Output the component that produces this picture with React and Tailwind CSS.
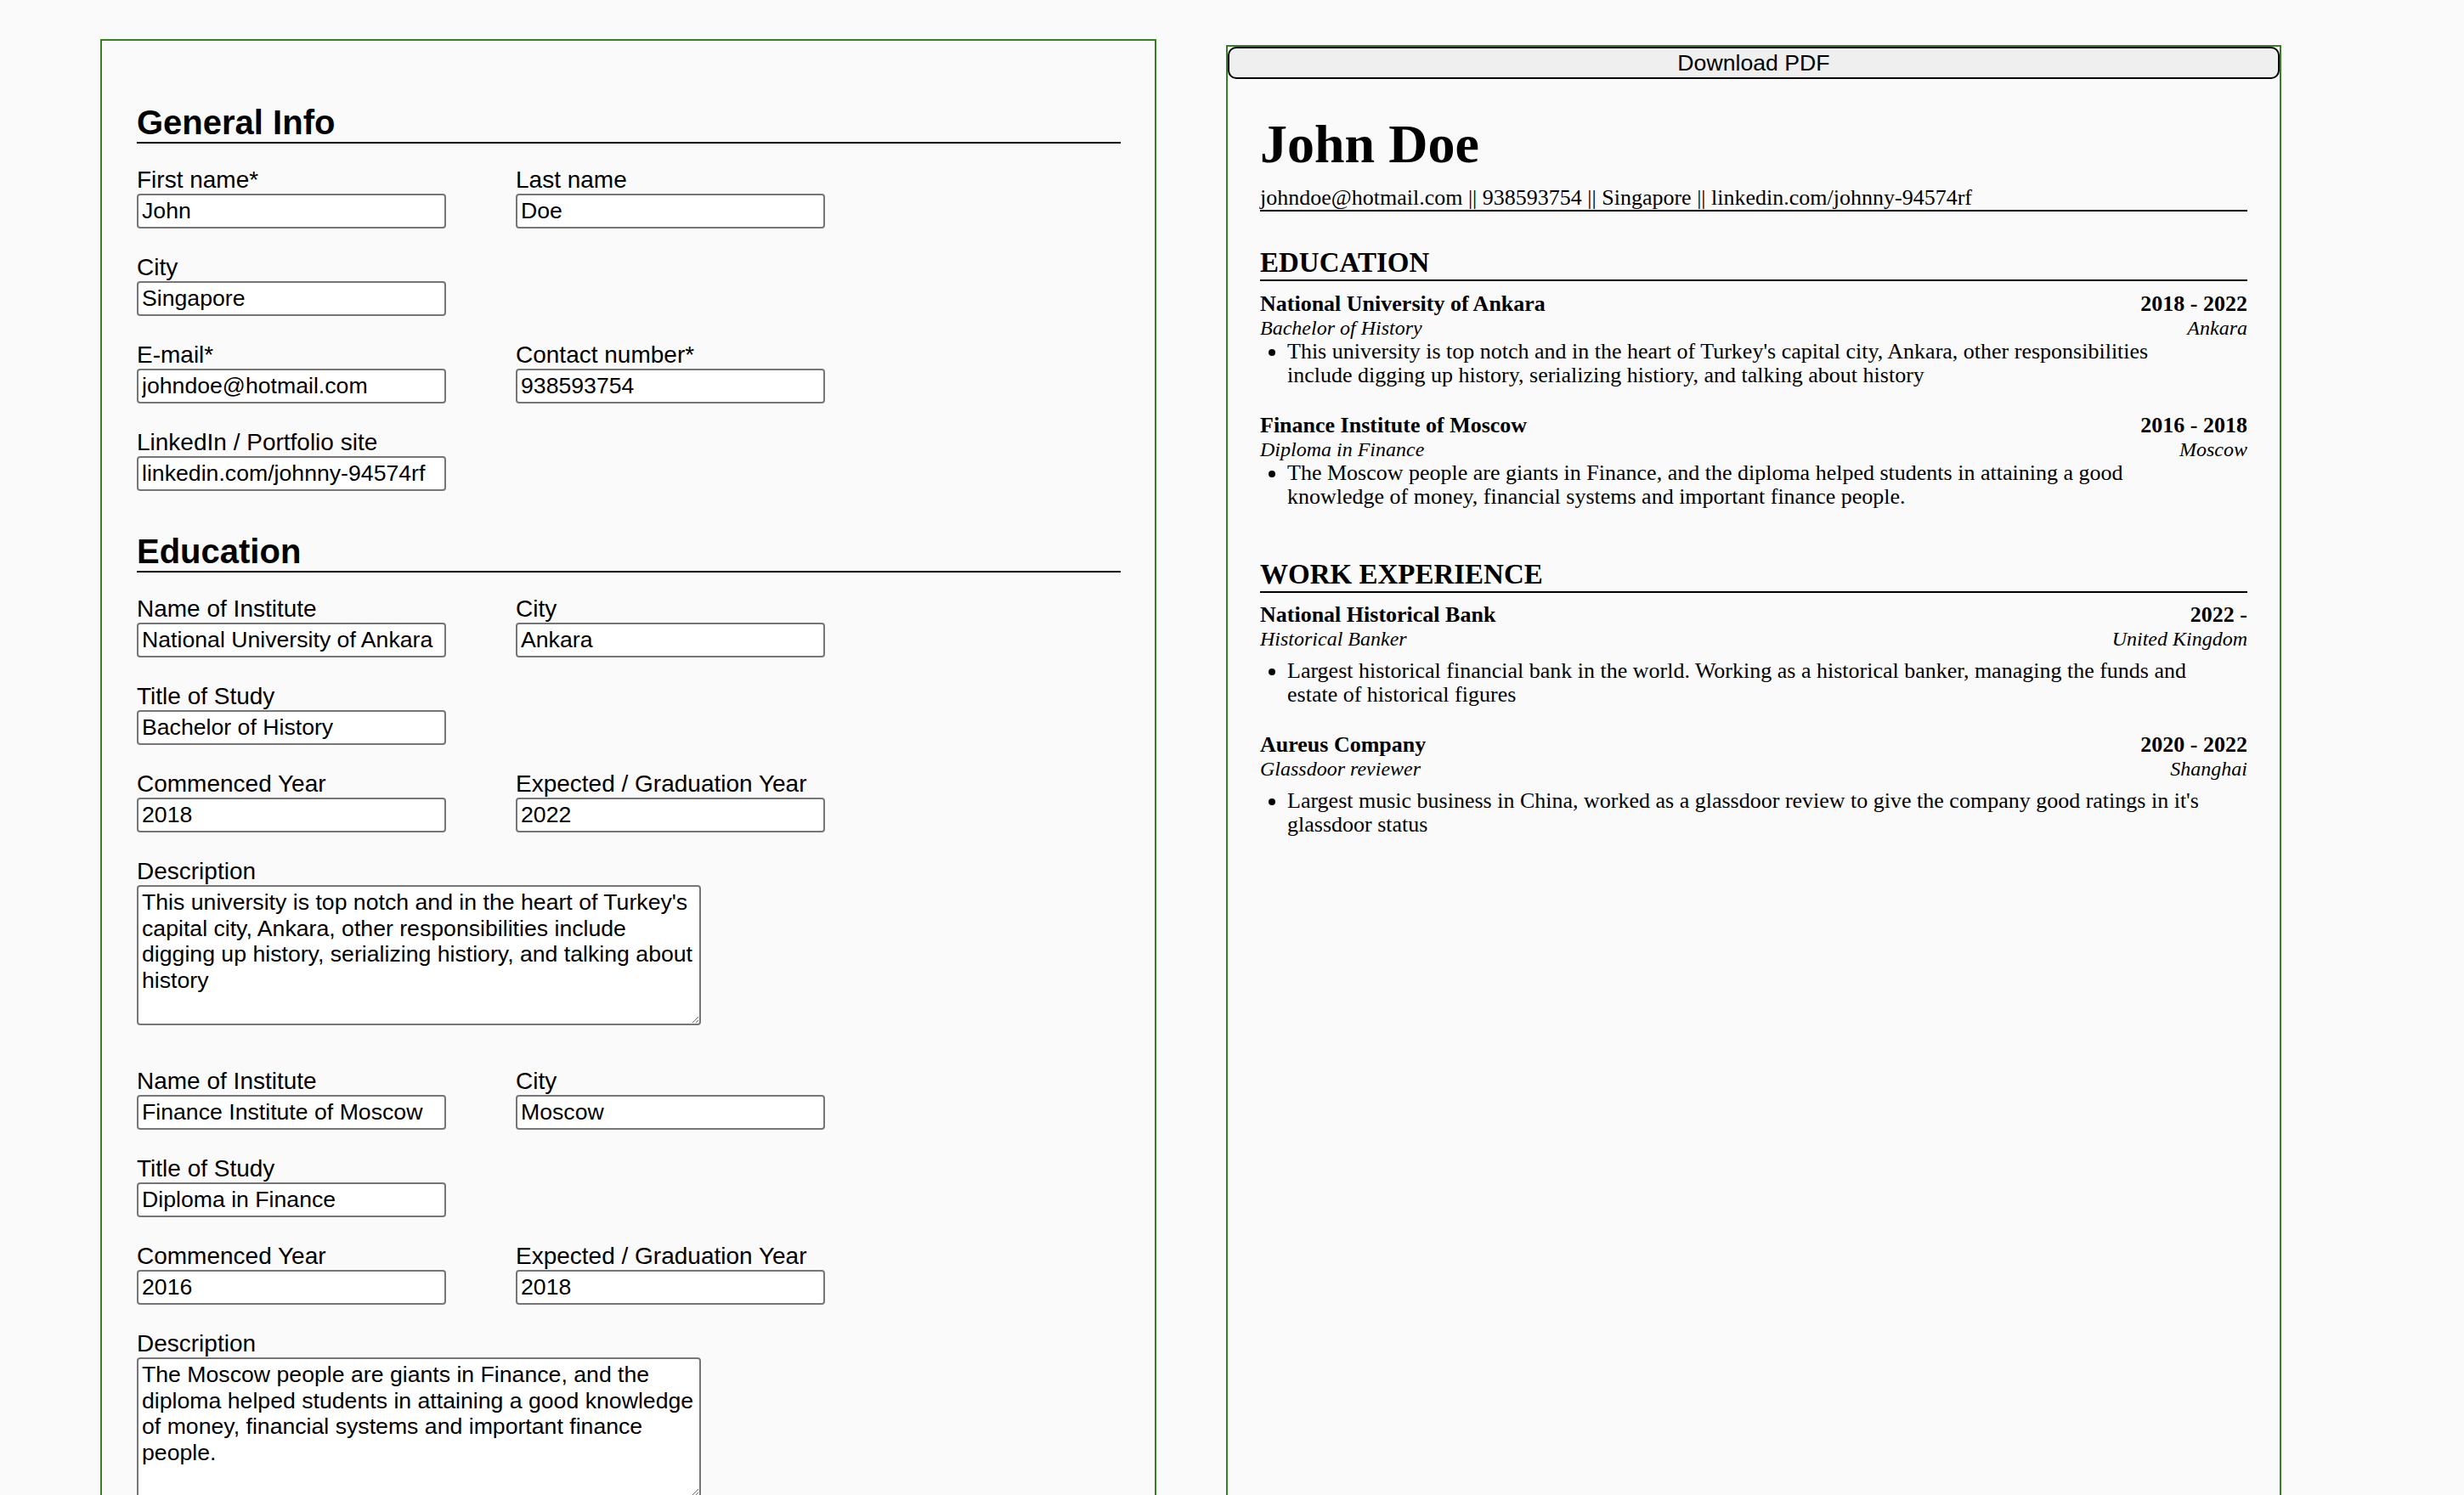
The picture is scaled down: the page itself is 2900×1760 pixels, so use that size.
import React from 'react';

const general = [
  { label: 'First name*', value: 'John' },
  { label: 'Last name', value: 'Doe' },
  { label: 'City', value: 'Singapore' },
  { label: 'E-mail*', value: 'johndoe@hotmail.com', newRow: true },
  { label: 'Contact number*', value: '938593754' },
  { label: 'LinkedIn / Portfolio site', value: 'linkedin.com/johnny-94574rf' },
];

const education = [
  {
    school: 'National University of Ankara',
    city: 'Ankara',
    title: 'Bachelor of History',
    start: '2018',
    end: '2022',
    desc: "This university is top notch and in the heart of Turkey's capital city, Ankara, other responsibilities include digging up history, serializing histiory, and talking about history",
  },
  {
    school: 'Finance Institute of Moscow',
    city: 'Moscow',
    title: 'Diploma in Finance',
    start: '2016',
    end: '2018',
    desc: 'The Moscow people are giants in Finance, and the diploma helped students in attaining a good knowledge of money, financial systems and important finance people.',
  },
];

const work = [
  {
    company: 'National Historical Bank',
    position: 'Historical Banker',
    city: 'United Kingdom',
    start: '2022',
    end: '',
    desc: 'Largest historical financial bank in the world. Working as a historical banker, managing the funds and estate of historical figures',
  },
  {
    company: 'Aureus Company',
    position: 'Glassdoor reviewer',
    city: 'Shanghai',
    start: '2020',
    end: '2022',
    desc: "Largest music business in China, worked as a glassdoor review to give the company good ratings in it's glassdoor status",
  },
];

function Field({ label, value, className = '' }) {
  return (
    <label className={`block ${className}`}>
      <span className="block text-[28px] leading-[32px]">{label}</span>
      <input
        defaultValue={value}
        className="block w-[364px] h-[41px] px-[4px] border-2 border-[#767676] rounded-[4px] bg-white text-[26.67px] text-black outline-none"
      />
    </label>
  );
}

function Description({ value }) {
  return (
    <label className="block col-span-2">
      <span className="block text-[28px] leading-[32px]">Description</span>
      <textarea
        defaultValue={value}
        spellCheck={false}
        className="block w-[664px] h-[165px] px-[4px] py-[3px] border-2 border-[#767676] rounded-[4px] bg-white text-[26.67px] leading-[1.15] text-black outline-none"
      />
    </label>
  );
}

function FormHeading({ children, className = '' }) {
  return (
    <h2 className={`text-[40px] font-bold leading-[46px] border-b-2 border-black ${className}`}>
      {children}
    </h2>
  );
}

function EducationForm({ item, className = '' }) {
  return (
    <div className={`grid grid-cols-[364px_364px] gap-x-[82px] gap-y-[30px] ${className}`}>
      <Field label="Name of Institute" value={item.school} />
      <Field label="City" value={item.city} />
      <Field label="Title of Study" value={item.title} />
      <Field label="Commenced Year" value={item.start} className="col-start-1" />
      <Field label="Expected / Graduation Year" value={item.end} />
      <Description value={item.desc} />
    </div>
  );
}

function ResumeHeading({ children, className = '' }) {
  return (
    <h2 className={`text-[33px] font-bold leading-[36px] pb-[2px] border-b-2 border-black ${className}`}>
      {children}
    </h2>
  );
}

function ResumeEntry({ name, dates, sub, place, desc, listGap, className = '' }) {
  return (
    <div className={className}>
      <div className="flex justify-between text-[26px] font-bold leading-[28px]">
        <span>{name}</span>
        <span>{dates}</span>
      </div>
      <div className="flex justify-between text-[24px] italic leading-[28px]">
        <span>{sub}</span>
        <span>{place}</span>
      </div>
      <ul className={`list-disc pl-[32px] pr-[40px] text-[26px] leading-[28px] ${listGap ? 'mt-[10px]' : ''}`}>
        <li>{desc}</li>
      </ul>
    </div>
  );
}

export default function App() {
  return (
    <div className="h-screen overflow-hidden bg-[#fafafa] text-black">
      <div className="flex items-start pl-[118px] gap-[82px]">
        {/* Form */}
        <div className="mt-[46px] w-[1243px] shrink-0 border-2 border-[#367f22] pt-[73px] pl-[41px] pr-[40px] pb-[80px] font-['Liberation_Sans',Arial,sans-serif]">
          <FormHeading>General Info</FormHeading>
          <div className="mt-[27px] grid grid-cols-[364px_364px] gap-x-[82px] gap-y-[30px]">
            {general.map((f) => (
              <Field key={f.label} label={f.label} value={f.value} className={f.newRow ? 'col-start-1' : ''} />
            ))}
          </div>

          <FormHeading className="mt-[48px]">Education</FormHeading>
          {education.map((item, i) => (
            <EducationForm key={item.school} item={item} className={i === 0 ? 'mt-[27px]' : 'mt-[50px]'} />
          ))}

          <FormHeading className="mt-[48px]">Work Experience</FormHeading>
          <div className="mt-[27px] grid grid-cols-[364px_364px] gap-x-[82px] gap-y-[30px]">
            <Field label="Company Name" value={work[0].company} />
            <Field label="City" value={work[0].city} />
            <Field label="Position" value={work[0].position} />
          </div>
        </div>

        {/* Preview */}
        <div className="mt-[53px] w-[1242px] h-[1756px] shrink-0 border-2 border-[#367f22]">
          <button className="block w-full h-[38px] border-2 border-black rounded-[10px] bg-[#efefef] text-[26.67px] leading-none text-black font-['Liberation_Sans',Arial,sans-serif]">
            Download PDF
          </button>
          <div className="px-[38px] font-['Liberation_Serif','Times_New_Roman',serif]">
            <h1 className="mt-[45px] text-[64px] font-bold leading-[64px]">John Doe</h1>
            <p className="mt-[17px] text-[26px] leading-[28px] border-b-2 border-black">
              johndoe@hotmail.com || 938593754 || Singapore || linkedin.com/johnny-94574rf
            </p>

            <ResumeHeading className="mt-[42px]">EDUCATION</ResumeHeading>
            {education.map((item, i) => (
              <ResumeEntry
                key={item.school}
                name={item.school}
                dates={`${item.start} - ${item.end}`}
                sub={item.title}
                place={item.city}
                desc={item.desc}
                className={i === 0 ? 'mt-[13px]' : 'mt-[31px]'}
              />
            ))}

            <ResumeHeading className="mt-[59px]">WORK EXPERIENCE</ResumeHeading>
            {work.map((item, i) => (
              <ResumeEntry
                key={item.company}
                name={item.company}
                dates={`${item.start} - ${item.end}`.trim()}
                sub={item.position}
                place={item.city}
                desc={item.desc}
                listGap
                className={i === 0 ? 'mt-[12px]' : 'mt-[31px]'}
              />
            ))}
          </div>
        </div>
      </div>
    </div>
  );
}
